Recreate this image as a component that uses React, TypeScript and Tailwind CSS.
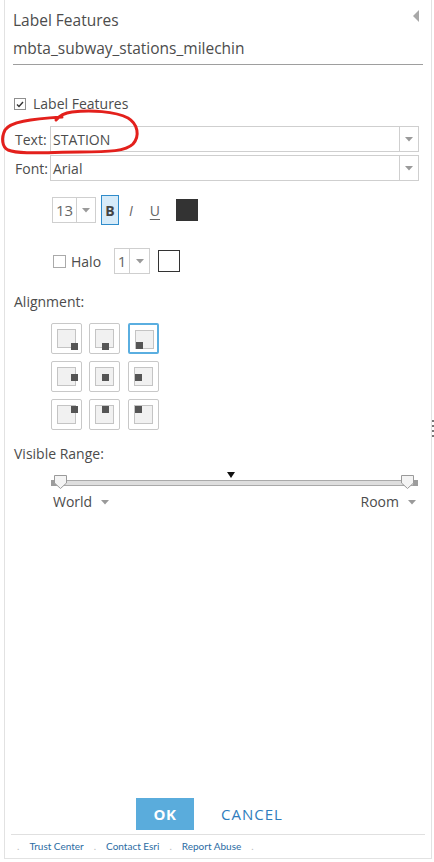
import React from 'react';

const Caret = ({ className = '' }: { className?: string }) => (
  <svg width="8" height="5" viewBox="0 0 8 5" className={className}>
    <path d="M0 0 L8 0 L4 4.5 Z" fill="#9a9a9a" />
  </svg>
);

const SelectBox = ({ value }: { value: string }) => (
  <div className="flex h-[26px] flex-1 items-stretch border border-[#cfcfcf] bg-white">
    <div className="flex flex-1 items-center pl-[2px] text-[14px] text-[#4c4c4c]">{value}</div>
    <div className="flex w-[19px] items-center justify-center border-l border-[#cfcfcf]">
      <Caret />
    </div>
  </div>
);

// label point marker positions inside each alignment cell
const cells = [
  { mx: 'right-[3px]', my: 'bottom-[3px]' },
  { mx: 'left-[12px]', my: 'bottom-[3px]' },
  { mx: 'left-[6px]', my: 'bottom-[3px]', active: true },
  { mx: 'right-[3px]', my: 'top-[12px]' },
  { mx: 'left-[12px]', my: 'top-[12px]' },
  { mx: 'left-[6px]', my: 'top-[12px]' },
  { mx: 'right-[3px]', my: 'top-[6px]' },
  { mx: 'left-[12px]', my: 'top-[6px]' },
  { mx: 'left-[6px]', my: 'top-[6px]' },
];

const Thumb = ({ className }: { className: string }) => (
  <svg width="13" height="14" viewBox="0 0 13 14" className={className}>
    <path d="M0.5 0.5 H12.5 V8 L6.5 13.5 L0.5 8 Z" fill="#f4f4f4" stroke="#9a9a9a" />
  </svg>
);

export default function App() {
  return (
    <div className="relative h-[862px] w-[434px] overflow-hidden bg-white font-['Open_Sans',sans-serif] text-[#4c4c4c]">
      <div className="ml-[4px] flex h-[859px] w-[428px] flex-col border-x border-b border-[#e2e2e2]">
        {/* header */}
        <div className="relative mx-[8px] border-b border-[#9e9e9e] pb-[5px] pt-[9px]">
          <div className="text-[15.5px] leading-[22px]">Label Features</div>
          <div className="mt-[6px] text-[15.5px] leading-[22px]">mbta_subway_stations_milechin</div>
          <svg width="6" height="12" viewBox="0 0 6 12" className="absolute right-[4px] top-[10px]">
            <path d="M6 0 V12 L0 6 Z" fill="#a8a8a8" />
          </svg>
        </div>

        <div className="pl-[9px] pr-[12px]">
          <label className="mt-[31px] flex items-center gap-[7px] text-[14px] leading-[16px]">
            <span className="flex h-[12px] w-[12px] items-center justify-center border border-[#8f8f8f] bg-white">
              <svg width="8" height="7" viewBox="0 0 8 7">
                <path d="M1 3.5 L3 5.5 L7 1" fill="none" stroke="#333" strokeWidth="1.4" />
              </svg>
            </span>
            Label Features
          </label>

          <div className="mt-[14px] flex items-center">
            <span className="w-[36px] pl-[1px] text-[14px]">Text:</span>
            <SelectBox value="STATION" />
          </div>
          <div className="mt-[3px] flex items-center">
            <span className="w-[36px] pl-[1px] text-[14px]">Font:</span>
            <SelectBox value="Arial" />
          </div>

          <div className="mt-[14px] flex items-center pl-[38px]">
            <div className="flex h-[26px] w-[44px] border border-[#cfcfcf]">
              <div className="flex w-[23px] items-center justify-center text-[15px] text-[#666]">13</div>
              <div className="flex flex-1 items-center justify-center border-l border-[#cfcfcf]">
                <Caret />
              </div>
            </div>
            <div className="ml-[5px] flex h-[30px] w-[18px] items-center justify-center border border-[#2f8ccb] bg-[#d6ebf9] text-[14px] font-bold text-[#444]">
              B
            </div>
            <div className="ml-[10px] text-[14px] italic text-[#666]">I</div>
            <div className="ml-[17px] text-[14px] text-[#666] underline underline-offset-[3px]">U</div>
            <div className="ml-[16px] h-[22px] w-[22px] bg-[#333]" />
          </div>

          <div className="mt-[23px] flex h-[26px] items-center pl-[39px]">
            <span className="h-[13px] w-[13px] border border-[#aaa] bg-white" />
            <span className="ml-[5px] text-[14px]">Halo</span>
            <div className="ml-[13px] flex h-[26px] w-[36px] border border-[#cfcfcf]">
              <div className="flex w-[14px] items-center justify-center text-[15px] text-[#666]">1</div>
              <div className="flex flex-1 items-center justify-center border-l border-[#cfcfcf]">
                <Caret />
              </div>
            </div>
            <div className="ml-[8px] h-[22px] w-[22px] border border-[#333] bg-white" />
          </div>

          <div className="mt-[18px] text-[14px] leading-[20px]">Alignment:</div>
          <div className="mt-[11px] ml-[37px] grid w-[108px] grid-cols-3 gap-[7px]">
            {cells.map((c, i) => (
              <div
                key={i}
                className={`relative h-[31px] w-[31px] rounded-[2px] bg-white ${
                  c.active ? 'border-2 border-[#5aaee0]' : 'border border-[#c8c8c8]'
                }`}
              >
                <div className="absolute left-[5px] top-[5px] h-[19px] w-[19px] border border-[#c4c4c4] bg-[#f1f1f1]" />
                <div className={`absolute h-[7px] w-[7px] bg-[#555] ${c.mx} ${c.my}`} />
              </div>
            ))}
          </div>

          <div className="mt-[14px] text-[14px] leading-[20px]">Visible Range:</div>

          <div className="relative ml-[37px] mt-[16px] h-[7px] w-[367px]">
            <div className="absolute left-0 right-0 top-[0px] h-[6px] border-y border-[#a9a9a9] bg-[#dedede]" />
            <div className="absolute left-0 top-0 h-[6px] w-[5px] bg-[#9c9c9c]" />
            <div className="absolute right-0 top-0 h-[6px] w-[5px] bg-[#9c9c9c]" />
            <Thumb className="absolute left-[3px] top-[-5px]" />
            <Thumb className="absolute right-[4px] top-[-5px]" />
            <svg width="8" height="6" viewBox="0 0 8 6" className="absolute left-[176px] top-[-8px]">
              <path d="M0 0 H8 L4 6 Z" fill="#111" />
            </svg>
          </div>

          <div className="ml-[39px] mt-[5px] flex w-[363px] items-center justify-between text-[14px] leading-[20px]">
            <span className="flex items-center gap-[9px]">
              World <Caret />
            </span>
            <span className="flex items-center gap-[9px]">
              Room <Caret />
            </span>
          </div>
        </div>

        <div className="flex-1" />

        <div className="flex items-center pl-[131px]">
          <button className="h-[32px] w-[58px] bg-[#5aacdc] text-[15px] font-bold tracking-[0.5px] text-white">OK</button>
          <button className="ml-[27px] text-[15px] tracking-[1px] text-[#2f7dbd]">CANCEL</button>
        </div>

        <div className="mx-[6px] mt-[4px] flex h-[24px] items-center gap-[10px] border-t border-[#e0e0e0] pl-[6px] font-['Lato',sans-serif] text-[10px] text-[#2b6ca3]">
          <span className="text-[#bbb]">.</span>
          <span>Trust Center</span>
          <span className="text-[#bbb]">.</span>
          <span>Contact Esri</span>
          <span className="text-[#bbb]">.</span>
          <span>Report Abuse</span>
          <span className="text-[#bbb]">.</span>
        </div>
      </div>

      {/* splitter grip */}
      <div className="absolute left-[432px] top-[420px] flex flex-col gap-[3px]">
        <span className="h-[2px] w-[2px] bg-[#777]" />
        <span className="h-[2px] w-[2px] bg-[#777]" />
        <span className="h-[2px] w-[2px] bg-[#777]" />
        <span className="h-[2px] w-[2px] bg-[#777]" />
      </div>

      {/* red hand-drawn annotation */}
      <svg width="150" height="170" viewBox="0 0 150 170" className="pointer-events-none absolute left-0 top-0">
        <path
          d="M56 120 C60 115 64 113 72 112 C90 110 115 111 128 118 C138 124 140 136 133 144 C126 151 110 152 80 152 C50 152 20 155 8 150 C2 147 1 138 5 130 C10 122 30 119 62 117"
          fill="none"
          stroke="#e3201c"
          strokeWidth="3"
          strokeLinecap="round"
        />
      </svg>
    </div>
  );
}
